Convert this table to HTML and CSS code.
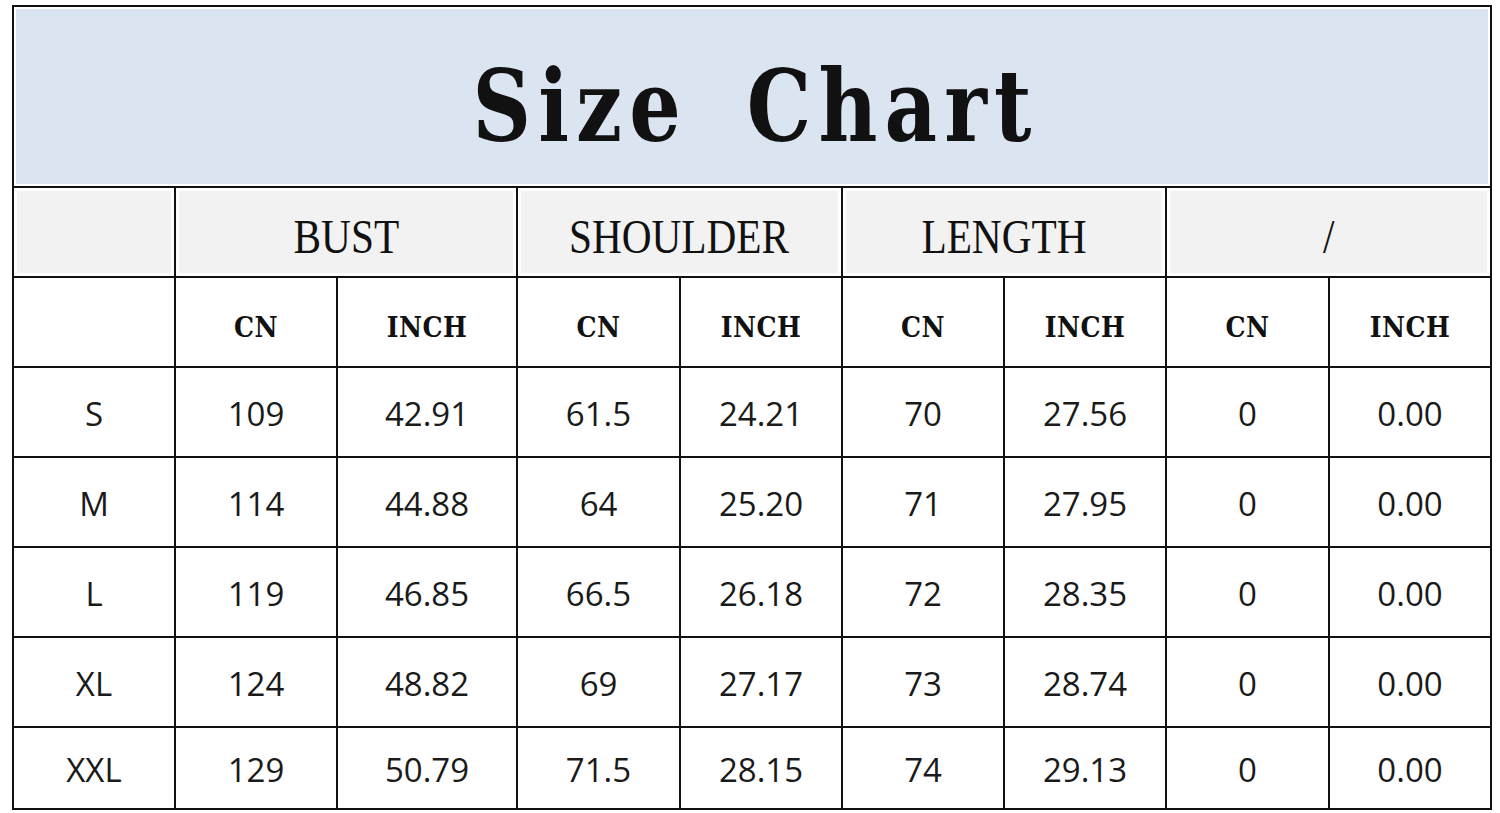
FILE: index.html
```html
<!DOCTYPE html>
<html>
<head>
<meta charset="utf-8">
<link rel="stylesheet" href="styles.css">
</head>
<body>
<div class="chart">
  <div class="cell title"><span class="title-text">Size Chart</span></div>

  <div class="cell head"></div>
  <div class="cell head span2"><span class="head-text">BUST</span></div>
  <div class="cell head span2"><span class="head-text">SHOULDER</span></div>
  <div class="cell head span2"><span class="head-text">LENGTH</span></div>
  <div class="cell head span2"><span class="head-text">/</span></div>

  <div class="cell sub"></div>
  <div class="cell sub">CN</div><div class="cell sub">INCH</div>
  <div class="cell sub">CN</div><div class="cell sub">INCH</div>
  <div class="cell sub">CN</div><div class="cell sub">INCH</div>
  <div class="cell sub">CN</div><div class="cell sub">INCH</div>

  <div class="cell data">S</div><div class="cell data">109</div><div class="cell data">42.91</div><div class="cell data">61.5</div><div class="cell data">24.21</div><div class="cell data">70</div><div class="cell data">27.56</div><div class="cell data">0</div><div class="cell data">0.00</div>
  <div class="cell data">M</div><div class="cell data">114</div><div class="cell data">44.88</div><div class="cell data">64</div><div class="cell data">25.20</div><div class="cell data">71</div><div class="cell data">27.95</div><div class="cell data">0</div><div class="cell data">0.00</div>
  <div class="cell data">L</div><div class="cell data">119</div><div class="cell data">46.85</div><div class="cell data">66.5</div><div class="cell data">26.18</div><div class="cell data">72</div><div class="cell data">28.35</div><div class="cell data">0</div><div class="cell data">0.00</div>
  <div class="cell data">XL</div><div class="cell data">124</div><div class="cell data">48.82</div><div class="cell data">69</div><div class="cell data">27.17</div><div class="cell data">73</div><div class="cell data">28.74</div><div class="cell data">0</div><div class="cell data">0.00</div>
  <div class="cell data">XXL</div><div class="cell data">129</div><div class="cell data">50.79</div><div class="cell data">71.5</div><div class="cell data">28.15</div><div class="cell data">74</div><div class="cell data">29.13</div><div class="cell data">0</div><div class="cell data">0.00</div>
</div>
</body>
</html>
```

FILE: styles.css
```css
html, body {
  margin: 0;
  padding: 0;
  background: #ffffff;
}

body {
  padding: 5px 0 0 12px;
  width: 1500px;
  height: 813px;
  box-sizing: border-box;
  overflow: hidden;
}

.chart {
  display: grid;
  width: 1480px;
  box-sizing: border-box;
  padding: 2px;
  gap: 2px;
  background: #111111;
  grid-template-columns: 160px 160px 178px 161px 160px 160px 160px 161px 160px;
  grid-template-rows: 179px 88px 88px 88px 88px 88px 88px 80px;
}

.cell {
  background: #ffffff;
  display: flex;
  align-items: center;
  justify-content: center;
  color: #111111;
}

.title {
  grid-column: 1 / -1;
  background: #dbe5f1;
  box-shadow: inset 0 0 0 2px #ffffff;
  padding-top: 18px;
  box-sizing: border-box;
}

.title-text {
  display: inline-block;
  font-family: "DejaVu Serif Condensed", "DejaVu Serif", serif;
  font-stretch: condensed;
  font-weight: bold;
  font-size: 100px;
  line-height: 1;
  letter-spacing: 8px;
  word-spacing: 26px;
  transform: scaleX(0.9);
  margin-left: 8px;
}

.head {
  background: #f2f2f2;
  box-shadow: inset 0 0 0 3px #ffffff;
  padding-top: 10px;
  box-sizing: border-box;
}

.span2 {
  grid-column: span 2;
}

.head-text {
  display: inline-block;
  font-family: "Liberation Serif", serif;
  font-size: 48px;
  line-height: 1;
  transform: scaleX(0.86);
}

.sub {
  font-family: "DejaVu Serif Condensed", "DejaVu Serif", serif;
  font-stretch: condensed;
  font-weight: bold;
  font-size: 28px;
  letter-spacing: 0.5px;
  padding-top: 10px;
  box-sizing: border-box;
}

.data {
  font-family: "Open Sans", sans-serif;
  font-size: 33px;
  padding-top: 2px;
  box-sizing: border-box;
  color: #1a1a1a;
}
```
